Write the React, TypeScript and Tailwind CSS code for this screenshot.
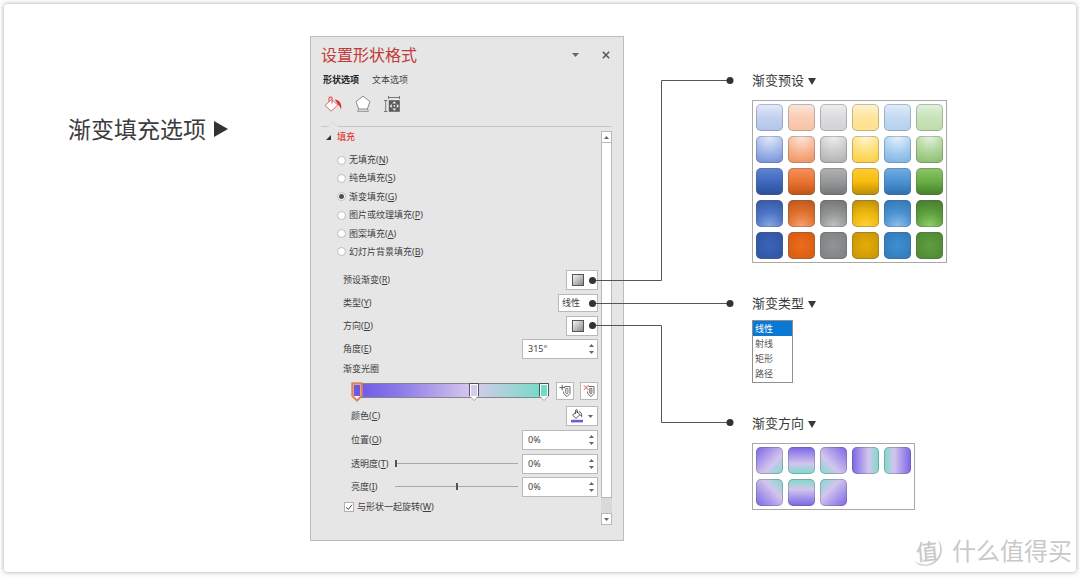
import React, { useState } from "react";

const presets: string[] = [
  "bg-[linear-gradient(#e4eafa,#c3d0f0_50%,#b3c4ea)]",
  "bg-[linear-gradient(#fbe5da,#f9cdb6_50%,#f8c2a4)]",
  "bg-[linear-gradient(#ededef,#dcdcde_50%,#d2d2d4)]",
  "bg-[linear-gradient(#fff3cf,#ffe59c_50%,#ffe18c)]",
  "bg-[linear-gradient(#e0edfa,#c3daf3_50%,#b5d0ee)]",
  "bg-[linear-gradient(#e2f1db,#c8e3b9_50%,#bddcab)]",
  "bg-[radial-gradient(circle_at_50%_0%,#e6edfb,#a9bdea_50%,#6c8cd6)]",
  "bg-[radial-gradient(circle_at_50%_0%,#fce9df,#f8b896_50%,#ef8d56)]",
  "bg-[radial-gradient(circle_at_50%_0%,#f0f0f0,#cdcdcd_50%,#acacac)]",
  "bg-[radial-gradient(circle_at_50%_0%,#fff6d8,#ffe07d_50%,#fccb36)]",
  "bg-[radial-gradient(circle_at_50%_0%,#e8f3fd,#a9d0f0_50%,#79afe0)]",
  "bg-[radial-gradient(circle_at_50%_0%,#e8f4e2,#b1d79d_50%,#86bb69)]",
  "bg-[linear-gradient(#5f86d2,#3f69bf_50%,#2b4f98)]",
  "bg-[linear-gradient(#f4935c,#ea7431_50%,#bf5517)]",
  "bg-[linear-gradient(#b0b2b2,#969999_50%,#747676)]",
  "bg-[linear-gradient(#ffcd3a,#fabb0c_50%,#b88b05)]",
  "bg-[linear-gradient(#72aee2,#4c92d0_50%,#2d6fae)]",
  "bg-[linear-gradient(#8cc76b,#68ae45_50%,#457f29)]",
  "bg-[radial-gradient(circle_at_50%_100%,#8aa8e4,#4c74c4_50%,#31559f)]",
  "bg-[radial-gradient(circle_at_50%_100%,#f8a373,#e0712f_50%,#b95417)]",
  "bg-[radial-gradient(circle_at_50%_100%,#c2c4c4,#929494_50%,#707272)]",
  "bg-[radial-gradient(circle_at_50%_100%,#ffd23c,#eeb60c_50%,#b48805)]",
  "bg-[radial-gradient(circle_at_50%_100%,#8ec2ee,#4b92d0_50%,#2f74b4)]",
  "bg-[radial-gradient(circle_at_50%_100%,#93d06c,#5d9e3d_50%,#437829)]",
  "bg-[radial-gradient(circle,#3b64b6,#2e54a2)]",
  "bg-[radial-gradient(circle,#ee6c1c,#d25a10)]",
  "bg-[radial-gradient(circle,#919494,#7c7f7f)]",
  "bg-[radial-gradient(circle,#e6ad04,#c29306)]",
  "bg-[radial-gradient(circle,#3f8ed2,#2f78b8)]",
  "bg-[radial-gradient(circle,#5f9f40,#4c8630)]",
];

const directions: string[] = [
  "bg-[linear-gradient(135deg,#7a64e6,#d3c5ed_62%,#79dcc9)]",
  "bg-[linear-gradient(180deg,#7a64e6,#d3c5ed_62%,#79dcc9)]",
  "bg-[linear-gradient(225deg,#7a64e6,#d3c5ed_62%,#79dcc9)]",
  "bg-[linear-gradient(90deg,#7a64e6,#d3c5ed_62%,#79dcc9)]",
  "bg-[linear-gradient(270deg,#7a64e6,#d3c5ed_62%,#79dcc9)]",
  "bg-[linear-gradient(45deg,#7a64e6,#d3c5ed_62%,#79dcc9)]",
  "bg-[linear-gradient(0deg,#7a64e6,#d3c5ed_62%,#79dcc9)]",
  "bg-[linear-gradient(315deg,#7a64e6,#d3c5ed_62%,#79dcc9)]",
];

const fills: [string, string][] = [
  ["无填充", "N"],
  ["纯色填充", "S"],
  ["渐变填充", "G"],
  ["图片或纹理填充", "P"],
  ["图案填充", "A"],
  ["幻灯片背景填充", "B"],
];

const types = ["线性", "射线", "矩形", "路径"];

function Key({ text, k }: { text: string; k: string }) {
  return (
    <>
      {text}(<span className="underline underline-offset-1">{k}</span>)
    </>
  );
}

function Triangle({ className }: { className: string }) {
  return (
    <svg viewBox="0 0 10 10" preserveAspectRatio="none" className={className} aria-hidden="true">
      <path d="M0 0h10L5 10z" fill="currentColor" />
    </svg>
  );
}

function BucketIcon() {
  return (
    <svg viewBox="0 0 18 18" className="size-[18px]" fill="none" aria-hidden="true">
      <path d="M7.6 4.4 1 10.4 7.2 16.2 13.800 10Z" fill="#fff" stroke="#dc6a66" strokeWidth="1" strokeLinejoin="round" />
      <path d="M5 6.800V2.200H8V8.600" stroke="#d9504c" strokeWidth="1" />
      <path d="M10.8 4.6C15.600 5.200 18.2 9 17 14.400 16.4 12.4 15.6 11 14.2 9.800Z" fill="#d5302e" />
    </svg>
  );
}

function PentagonIcon() {
  return (
    <svg viewBox="0 0 16 18" className="h-[18px] w-4" fill="none" aria-hidden="true">
      <path d="M3.6 13.6 2.6 16.4H13.400L12.4 13.6Z" fill="#e2e2e2" stroke="#8c8c8c" strokeWidth=".9" />
      <path d="M8 1.2 15 6.6 12.4 14H3.6L1 6.6Z" fill="#fff" stroke="#8c8c8c" strokeWidth="1" strokeLinejoin="round" />
    </svg>
  );
}

function SizeIcon() {
  return (
    <svg viewBox="0 0 16 18" className="h-[18px] w-4" fill="none" aria-hidden="true">
      <path d="M4.5 1v3M15.5 1v3M4.5 2.5h11M0 5.5h3.4M0 16.5h3.4M1.7 5.5v11" stroke="#6b6b6b" strokeWidth=".9" />
      <path d="M4.8 5.2h11v11.6h-11z" fill="#5c5c5c" />
      <path d="M10.3 6.2 8.3 8.6h4zM10.3 15.8l-2-2.4h4zM5.6 11l2.2-2v4zM15 11l-2.2-2v4z" fill="#eee" />
      <path d="M9.5 10.2h1.6v1.6H9.5z" fill="#eee" />
    </svg>
  );
}

function StopIcon({ remove }: { remove?: boolean }) {
  return (
    <svg viewBox="0 0 12 14" className="h-[14px] w-3" fill="none" aria-hidden="true">
      <path d="M5.5 2.5H11V9.5L8 12.6 4.6 9.5V7.4" stroke="#6a6a6a" strokeWidth="1" />
      <path d="M6.6 4.4H9V9L8 10 6.6 9Z" fill={remove ? "#c9b3b3" : "#d5dcd7"} stroke="#777" strokeWidth=".8" />
      {remove ? (
        <path d="M.8 1.2 5.4 6M5.4 1.2.8 6" stroke="#cc5a54" strokeWidth="1" />
      ) : (
        <path d="M3.2.8v5.6M.4 3.6H6" stroke="#4e6a59" strokeWidth="1" />
      )}
    </svg>
  );
}

function SmallBucket() {
  return (
    <svg viewBox="0 0 12 14" className="h-[14px] w-3" fill="none" aria-hidden="true">
      <path d="M5.6 2.4 1.6 6.2 5 9.4 9 5.6Z" stroke="#5a5a5a" strokeWidth="1" />
      <path d="M4.6 5V1.4c0-1 1.8-1 1.8 0V4M8 2.6c2 .4 3 2 2.6 5L9.2 5.6" stroke="#444" strokeWidth=".9" />
      <path d="M0 10.8h12v2.6H0z" fill="#6a5fd6" />
    </svg>
  );
}

const control = "border border-[#b9b9b9] bg-white";

function Row({ htmlFor, label, k, indent, tall, children }: {
  htmlFor: string;
  label: string;
  k: string;
  indent?: boolean;
  tall?: boolean;
  children: React.ReactNode;
}) {
  return (
    <div className={`flex items-center ${tall ? "h-6" : "h-[23px]"} ${indent ? "pl-[30px]" : "pl-[22px]"}`}>
      <label htmlFor={htmlFor} className="whitespace-nowrap">
        <Key text={label} k={k} />
      </label>
      <div className="ml-auto flex items-center gap-1">{children}</div>
    </div>
  );
}

function Spin({ id, initial }: { id: string; initial: string }) {
  const [value, setValue] = useState(initial);
  const unit = initial.slice(-1);
  const step = (d: number) => setValue(`${(parseInt(value, 10) || 0) + d}${unit}`);
  return (
    <div className={`flex h-5 w-[76px] items-center pr-[3px] pl-[5px] ${control}`}>
      <input id={id} value={value} onChange={(e) => setValue(e.target.value)} className="w-0 flex-1 bg-transparent outline-none" />
      <div className="flex flex-col gap-1 text-[#666]">
        <button aria-label="增大" onClick={() => step(1)}>
          <Triangle className="h-[3px] w-[5px] rotate-180" />
        </button>
        <button aria-label="减小" onClick={() => step(-1)}>
          <Triangle className="h-[3px] w-[5px]" />
        </button>
      </div>
    </div>
  );
}

function Slider({ id, min, label }: { id: string; min: number; label: string }) {
  return (
    <input
      id={id}
      type="range"
      min={min}
      max={100}
      defaultValue={0}
      aria-label={label}
      className="h-2 w-[123px] appearance-none bg-[linear-gradient(#a8a8a8,#a8a8a8)] bg-[length:100%_1px] bg-center bg-no-repeat [&::-webkit-slider-thumb]:h-[7px] [&::-webkit-slider-thumb]:w-[2px] [&::-webkit-slider-thumb]:appearance-none [&::-webkit-slider-thumb]:bg-[#555]"
    />
  );
}

function GradientButton({ id }: { id: string }) {
  return (
    <button id={id} className={`flex h-5 w-8 items-center pl-[5px] ${control}`}>
      <span className="size-3 border border-[#555] bg-[linear-gradient(135deg,#f4f4f4,#8a8a8a)]" />
    </button>
  );
}

function Stop({ place, fill, selected, label }: { place: string; fill: string; selected?: boolean; label: string }) {
  return (
    <button aria-label={label} className={`absolute top-0 ${place}`}>
      <svg viewBox="0 0 12 21" className="h-[21px] w-3" aria-hidden="true">
        <path
          d="M1.5 2.5h9v12.5L6 19.5 1.5 15Z"
          fill="#fff"
          stroke={selected ? "#d98560" : "#8b8b8b"}
          strokeWidth={selected ? 2 : 0.8}
        />
        <path d="M1.5 15V2.5h9V15" fill="none" stroke={selected ? "#d98560" : "#4f4f60"} strokeWidth={selected ? 2 : 1} />
        <path d="M3 4h6v11H3z" fill={fill} />
      </svg>
    </button>
  );
}

function Panel() {
  const [fill, setFill] = useState("G");
  return (
    <section className="w-[314px] border border-[#bdbdbd] bg-[#e7e6e6] pr-[11px] pb-[15px] pl-[10px] text-[9px] leading-3 text-[#3f3f3f]">
      <header className="flex h-9 items-center">
        <h2 className="text-[16px] leading-5 text-[#c23a38]">设置形状格式</h2>
        <button aria-label="任务窗格选项" className="ml-auto text-[#666]">
          <Triangle className="h-1 w-[7px]" />
        </button>
        <button aria-label="关闭" className="mr-[2px] ml-[23px] text-[#555]">
          <svg viewBox="0 0 8 8" className="size-2" aria-hidden="true">
            <path d="M.8.8l6.4 6.4M7.2.8.8 7.2" stroke="currentColor" strokeWidth="1.5" />
          </svg>
        </button>
      </header>
      <nav className="flex h-[14px] items-center gap-[13px] pl-[2px]">
        <button className="font-bold text-[#222]">形状选项</button>
        <button>文本选项</button>
      </nav>
      <div className="flex h-10 gap-[13px] border-b border-[#c6c6c6] pt-2 pl-[3px]">
        <button aria-label="填充与线条" className="relative h-[18px]">
          <BucketIcon />
          <svg viewBox="0 0 12 6" className="absolute top-[27px] left-[3px] h-[6px] w-3" aria-hidden="true">
            <path d="M0 6 6 0l6 6z" fill="#e7e6e6" />
            <path d="M0 5.5 6 .5l6 5" fill="none" stroke="#d6d6d6" strokeWidth=".8" />
          </svg>
        </button>
        <button aria-label="效果" className="h-[18px]"><PentagonIcon /></button>
        <button aria-label="大小与属性" className="h-[18px]"><SizeIcon /></button>
      </div>

      <div className="flex gap-[3px] pt-1">
        <div className="min-w-0 flex-1 pb-[9px]">
          <button className="flex h-3 items-center gap-[6px] pl-[5px] font-medium text-[#e03a32]">
            <svg viewBox="0 0 5 5" className="size-[5px]" aria-hidden="true">
              <path d="M5 0v5H0z" fill="#333" />
            </svg>
            填充
          </button>

          <div className="mt-2 flex h-[110px] flex-col justify-between pl-4">
            {fills.map(([text, k]) => (
              <label key={k} className="flex h-[18px] items-center gap-[3px]">
                <input
                  type="radio"
                  name="fill"
                  checked={fill === k}
                  onChange={() => setFill(k)}
                  className="size-[9px] appearance-none rounded-full border border-[#bcbcbc] bg-white checked:bg-[radial-gradient(circle,#505050_2px,#fff_3px)]"
                />
                <span><Key text={text} k={k} /></span>
              </label>
            ))}
          </div>

          <div className="mt-[7px]">
            <Row htmlFor="preset" label="预设渐变" k="R"><GradientButton id="preset" /></Row>
            <Row htmlFor="type" label="类型" k="Y">
              <select id="type" className={`h-[18px] w-10 appearance-none pl-[3px] ${control}`}>
                {types.map((t) => <option key={t}>{t}</option>)}
              </select>
            </Row>
            <Row htmlFor="direction" label="方向" k="D"><GradientButton id="direction" /></Row>
            <Row htmlFor="angle" label="角度" k="E"><Spin id="angle" initial="315°" /></Row>
            <div className="flex h-[18px] items-center pl-[22px]">渐变光圈</div>
            <div className="flex h-[26px] items-center gap-[6px] pl-[30px]">
              <div className="relative h-[21px] flex-1">
                <div className="mx-1 mt-[2px] h-[15px] border border-[#85858f] bg-[linear-gradient(90deg,#6c59e6,#8a78e8_22%,#d8caec_62%,#6fdcc6)]" />
                <Stop label="光圈 1" place="left-0" fill="#6b58e4" selected />
                <Stop label="光圈 2" place="left-[59%]" fill="#d8caec" />
                <Stop label="光圈 3" place="right-0" fill="#6fdcc6" />
              </div>
              <button aria-label="添加渐变光圈" className={`grid size-[18px] place-items-center ${control}`}><StopIcon /></button>
              <button aria-label="删除渐变光圈" className={`grid size-[18px] place-items-center ${control}`}><StopIcon remove /></button>
            </div>
            <Row htmlFor="color" label="颜色" k="C" indent tall>
              <button id="color" className={`flex h-5 w-8 items-center justify-between px-1 text-[#666] ${control}`}>
                <SmallBucket />
                <Triangle className="h-[3px] w-[5px]" />
              </button>
            </Row>
            <Row htmlFor="position" label="位置" k="O" indent tall><Spin id="position" initial="0%" /></Row>
            <Row htmlFor="alpha" label="透明度" k="T" indent>
              <Slider id="alpha-slider" min={0} label="透明度" />
              <Spin id="alpha" initial="0%" />
            </Row>
            <Row htmlFor="light" label="亮度" k="I" indent>
              <Slider id="light-slider" min={-100} label="亮度" />
              <Spin id="light" initial="0%" />
            </Row>
            <label className="flex h-[18px] items-center gap-[3px] pl-[23px]">
              <span className="relative flex">
                <input type="checkbox" defaultChecked className="peer size-[10px] appearance-none border border-[#b0b0b0] bg-white" />
                <svg viewBox="0 0 10 10" className="pointer-events-none absolute inset-0 hidden size-[10px] peer-checked:block" aria-hidden="true">
                  <path d="M2.2 5.2 4.2 7.4 8 2.8" fill="none" stroke="#444" strokeWidth="1" />
                </svg>
              </span>
              <span><Key text="与形状一起旋转" k="W" /></span>
            </label>
          </div>
        </div>

        <div className="flex w-[11px] flex-col bg-[#d9d9d9] text-[#666]">
          <button aria-label="向上滚动" className={`grid h-3 place-items-center ${control}`}>
            <Triangle className="h-[3px] w-[5px] rotate-180" />
          </button>
          <div className="flex-1 border-x border-b border-[#b9b9b9] bg-white" />
          <button aria-label="向下滚动" className={`mt-[15px] grid h-3 place-items-center ${control}`}>
            <Triangle className="h-[3px] w-[5px]" />
          </button>
        </div>
      </div>
    </section>
  );
}

function Note({ title, tight, children }: { title: string; tight?: boolean; children: React.ReactNode }) {
  return (
    <section className={`flex flex-col items-start ${tight ? "gap-[6px]" : "gap-[9px]"}`}>
      <h3 className="flex h-5 items-center gap-1 text-[13px] text-[#3a3a3a]">
        {title}
        <Triangle className="h-[7px] w-2" />
      </h3>
      {children}
    </section>
  );
}

function Swatches({ items, columns, name }: { items: string[]; columns: string; name: string }) {
  return (
    <div className={`grid gap-[5px] border border-[#a9a9a9] bg-white p-[3px] ${columns}`}>
      {items.map((c, i) => (
        <button key={c} aria-label={`${name} ${i + 1}`} className={`size-[27px] rounded-[5px] border border-[#5a5a6a]/35 bg-origin-border ${c}`} />
      ))}
    </div>
  );
}

function Connectors() {
  return (
    <svg viewBox="0 0 150 360" className="pointer-events-none absolute top-[72px] left-[278px] h-[360px] w-[150px]" aria-hidden="true">
      <g fill="none" stroke="#555" strokeWidth="1">
        <path d="M4 204.5H73.500V4.500H142" />
        <path d="M4 227.500H142" />
        <path d="M4 249.500H73.500V346.500H142" />
      </g>
      <g fill="#333">
        <circle cx="4.500" cy="204.500" r="3.500" />
        <circle cx="4.500" cy="227.500" r="3.500" />
        <circle cx="4.500" cy="249.500" r="3.500" />
        <circle cx="142" cy="4.500" r="3.500" />
        <circle cx="142" cy="227.500" r="3.500" />
        <circle cx="142" cy="346.500" r="3.500" />
      </g>
    </svg>
  );
}

export default function App() {
  return (
    <div className="flex min-h-screen bg-[#fdfcfd] p-1 pb-[5px] font-['Noto_Sans','Noto_Sans_CJK_SC',sans-serif]">
      <main className="relative flex flex-1 items-start rounded-[3px] bg-white shadow-[0_0_4px_rgba(0,0,0,0.35)]">
        <div className="flex-[306_1_0%]">
          <div className="flex items-center gap-2 pt-[109px] pl-16 whitespace-nowrap text-[#3c3c3c]">
            <h1 className="text-[23px] leading-8">渐变填充选项</h1>
            <svg viewBox="0 0 14 16" className="h-4 w-[14px]" aria-hidden="true">
              <path d="M0 0 14 8 0 16z" fill="#333" />
            </svg>
          </div>
        </div>

        <div className="relative flex shrink-0 items-start gap-32 pt-8">
          <Panel />
          <div className="flex flex-col gap-[31px] pt-[35px]">
            <Note title="渐变预设">
              <Swatches items={presets} columns="grid-cols-6" name="预设" />
            </Note>
            <Note title="渐变类型" tight>
              <ul role="listbox" aria-label="渐变类型" className="w-[41px] border border-[#8f8f8f] bg-white pb-px text-[9px] leading-[15px] text-[#555]">
                {types.map((t, i) => (
                  <li
                    key={t}
                    role="option"
                    aria-selected={i === 0}
                    className={i === 0 ? "bg-[#0a78d4] pl-[2px] text-white" : "pl-[2px]"}
                  >
                    {t}
                  </li>
                ))}
              </ul>
            </Note>
            <Note title="渐变方向">
              <Swatches items={directions} columns="grid-cols-5" name="方向" />
            </Note>
          </div>
          <Connectors />
        </div>
        <div className="flex-[129_1_0%]" />

        <div className="absolute right-1 bottom-[5px] flex items-center gap-[9px] text-[#c9c9c9]">
          <span className="relative grid size-8 place-items-center">
            <span className="-rotate-6 text-[22px] leading-8 font-medium">值</span>
            <svg viewBox="0 0 32 32" className="absolute inset-0 size-8" fill="none" aria-hidden="true">
              <path d="M27 4.500C33.500 12 32 25 20 30 12 32 6 30 3 25.500 7 29 12 30.500 18.500 29 29.500 25 31.500 13 27 4.500Z" fill="currentColor" />
            </svg>
          </span>
          <span className="text-[24px] leading-8">什么值得买</span>
        </div>
      </main>
    </div>
  );
}
